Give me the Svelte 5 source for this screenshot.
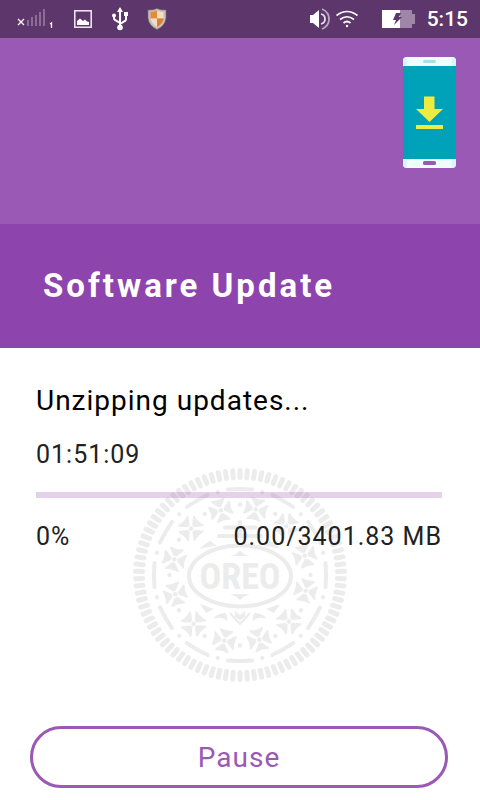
<script lang="ts">
	interface Props {
		status?: string;
		elapsed?: string;
		downloaded?: number;
		total?: number;
	}

	let {
		status = 'Unzipping updates...',
		elapsed = '01:51:09',
		downloaded = 0,
		total = 3401.83
	}: Props = $props();

	let paused = $state(false);
	let percent = $derived(Math.round((downloaded / total) * 100));

	// angles of the repeated cookie decorations
	const ridges = Array.from({ length: 90 }, (_, i) => i * 4);
	const twelfths = Array.from({ length: 12 }, (_, i) => i * 30);
	const petals = [0, 90, 180, 270];
</script>

<div class="screen">
	<div class="status-bar">
		<div class="status-left">
			<svg width="38" height="20" viewBox="0 0 38 20" role="img" aria-label="No signal">
				<path d="M1 10l6 6M7 10l-6 6" stroke="#fff" stroke-width="1.3" />
				<path d="M11 17v-6M15 17v-9M19 17V6M23 17V3M27 17V0" stroke="#8c6d98" stroke-width="2" />
				<path d="M33 15l1.5-1v5" fill="none" stroke="#fff" stroke-width="1.3" />
			</svg>
			<svg width="20" height="20" viewBox="0 0 20 20" role="img" aria-label="Screenshot saved">
				<rect x="1.8" y="1.8" width="16.4" height="16.4" fill="none" stroke="#f3edf5" stroke-width="1.5" />
				<path d="M4 16v-4l3-2.500 3 2.500 2-1.500 2 2 2 .5v3z" fill="#fff" />
			</svg>
			<svg width="18" height="24" viewBox="0 0 18 24" role="img" aria-label="USB connected">
				<path d="M9 4v17M9 16l-5-3q-1-.5-1-2V8M9 17l5-3q1-.5 1-2V8" fill="none" stroke="#fff" stroke-width="2" />
				<path d="M9 0l3 5H6z" fill="#fff" />
				<circle cx="3" cy="8.500" r="2" fill="#fff" />
				<rect x="13" y="5" width="4" height="4" fill="#fff" />
				<circle cx="9" cy="20.500" r="2.800" fill="#fff" />
			</svg>
			<svg width="20" height="22" viewBox="0 0 20 22" role="img" aria-label="Protection on">
				<path d="M1 2Q6 2.500 10 .5 14 2.500 19 2V10Q18 18 10 21.500 2 18 1 10z" fill="#c6bfb7" stroke="#776c6c" stroke-width=".6" />
				<path d="M3.500 4Q7 4 10 2.500V10.500H3.500z" fill="#e58a39" />
				<path d="M16.500 4Q13 4 10 2.500V10.500H16.500z" fill="#f1dec5" />
				<path d="M3.500 10.500H10V19Q4.500 16 3.500 10.500z" fill="#f1dec5" />
				<path d="M16.500 10.500H10V19Q15.500 16 16.500 10.500z" fill="#de7d2a" />
			</svg>
		</div>
		<div class="status-right">
			<svg width="22" height="24" viewBox="0 0 22 24" role="img" aria-label="Sound">
				<path d="M2 8h3l6-5v18l-6-5H2z" fill="#fff" />
				<path d="M13 7q4 1 4 5t-4 5" fill="none" stroke="#e7dfea" stroke-width="1.800" />
				<path d="M14 2q7 3 7 10t-7 10" fill="none" stroke="#b9a5c1" stroke-width="1.800" />
			</svg>
			<svg width="24" height="18" viewBox="0 0 24 18" role="img" aria-label="Wi-Fi">
				<path d="M1.500 5.500q10.500-8 21 0M5 9.500q7-5.500 14 0M8.500 13q3.500-3 7 0" fill="none" stroke="#fff" stroke-width="1.700" />
				<circle cx="12" cy="16" r="1.200" fill="#fff" />
			</svg>
			<svg class="battery" width="34" height="18" viewBox="0 0 34 18" role="img" aria-label="Battery charging">
				<path d="M0 0h18v18H0z" fill="#fff" />
				<path d="M18 0h12v4h3v10h-3v4H18z" fill="#9f86a9" />
				<path d="M14 3h5l-2 4h3l-8 8 2-5h-3z" fill="#5d366b" />
			</svg>
			<span class="clock">5:15</span>
		</div>
	</div>

	<div class="banner">
		<svg width="53" height="111" viewBox="0 0 53 111" aria-hidden="true">
			<rect width="53" height="111" rx="4" fill="#effdfe" />
			<path d="M0 4Q0 0 4 0V9H0zM53 4Q53 0 49 0V9H53zM0 107Q0 111 4 111V102H0zM53 107Q53 111 49 111V102H53z" fill="#d9f7fa" />
			<rect y="9" width="53" height="93" fill="#00a2b9" />
			<rect x="20" y="3" width="13" height="3" rx="1.500" fill="#a9e0e3" />
			<rect x="20" y="104" width="13" height="4" rx="1.500" fill="#9b59b6" />
			<path d="M21 39.500h10.500V52H40L26.500 65 13 52h8z" fill="#eeec42" />
			<rect x="13" y="68" width="27" height="4" fill="#eeec42" />
		</svg>
	</div>

	<header>
		<h1>Software Update</h1>
	</header>

	<main>
		<svg class="cookie" width="216" height="216" viewBox="-108 -108 216 216" aria-hidden="true">
			<defs>
				<path id="petal" d="M0-3.200L6-10.500Q0-8.500-6-10.500z" />
			</defs>
			{#each ridges as angle}
				<path class="line ridge" d="M0-97.500V-104.500" transform="rotate({angle})" />
			{/each}
			{#each twelfths as angle}
				<g transform="rotate({angle})">
					<path class="line" d="M-12-85.500Q0-86.500 12-85.500" />
					<circle cy="-70.500" r="2.200" />
					<circle cy="-86" r="2.100" transform="rotate(15)" />
					<g transform="rotate(13.500) translate(0 -67.500)">
						{#each petals as turn}
							<use class="petal" href="#petal" transform="rotate({turn})" />
						{/each}
						<circle class="seed" r="2.800" />
					</g>
				</g>
			{/each}
			<ellipse class="oval" cy="1" rx="51" ry="30.500" />
			<path class="line" d="M0-53V-40M-15-47.500H15M-21-39H21" />
			<path d="M-10-19Q-4-20 0-24.500 4-20 10-19zM-10 19H10Q4 21 0 25-4 21-10 19z" />
			<path d="M-41-26l11-8.500 7 5.500-9 1zM41-26l-11-8.500-7 5.500 9 1zM-40 29l14 5-8 4zM40 29l-14 5 8 4z" />
			<path d="M-27 43q6-5 13-5l2 8-6-3zM27 43q-6-5-13-5l-2 8 6-3z" />
			<path class="crown" d="M-10 38L0 49 10 38M-4 38v3L0 44l4-3v-3L0 42z" />
			<text x="0" y="14" text-anchor="middle">OREO</text>
		</svg>

		<p class="status">{status}</p>
		<p class="elapsed">{elapsed}</p>
		<div class="track" role="progressbar" aria-label="Update progress" aria-valuemin="0" aria-valuemax="100" aria-valuenow={percent}>
			<div class="fill" style="width: {percent}%"></div>
		</div>
		<div class="amounts">
			<span>{percent}%</span>
			<span>{downloaded.toFixed(2)}/{total.toFixed(2)} MB</span>
		</div>
	</main>

	<footer>
		<button type="button" onclick={() => (paused = !paused)}>{paused ? 'Resume' : 'Pause'}</button>
	</footer>
</div>

<style>
	:global(body) {
		margin: 0;
		background: #fff;
	}

	.screen {
		display: flex;
		flex-direction: column;
		min-height: 100vh;
		font-family: Roboto, 'Liberation Sans', sans-serif;
		color: #212121;
	}

	.status-bar {
		display: flex;
		align-items: center;
		justify-content: space-between;
		height: 38px;
		padding: 0 12px 0 17px;
		background: #5d366b;
	}

	.status-left,
	.status-right {
		display: flex;
		align-items: center;
		gap: 18px;
	}

	.status-right {
		gap: 5px;
	}

	.battery {
		margin: 0 6px 0 18px;
	}

	.clock {
		font-size: 21px;
		font-weight: 500;
		color: #fff;
	}

	.banner {
		display: flex;
		justify-content: flex-end;
		box-sizing: border-box;
		height: 186px;
		padding: 19px 24px;
		background: #9b59b6;
	}

	header {
		padding: 42px 43px;
		background: #8e44ad;
	}

	h1 {
		margin: 0;
		font-size: 33px;
		line-height: 40px;
		font-weight: 700;
		letter-spacing: 3px;
		color: #fff;
	}

	main {
		position: relative;
		padding: 37px 38px 0 36px;
	}

	/* watermark behind the progress details */
	.cookie {
		position: absolute;
		top: 119px;
		left: 50%;
		margin-left: -108px;
		fill: #ececec;
	}

	.line {
		fill: none;
		stroke: #ececec;
		stroke-width: 4;
		stroke-linecap: round;
	}

	.ridge {
		stroke-width: 5;
	}

	.petal {
		stroke: #ececec;
		stroke-width: 2;
		stroke-linejoin: round;
	}

	.seed {
		stroke: #fff;
		stroke-width: 1;
	}

	.oval {
		fill: none;
		stroke: #ececec;
		stroke-width: 4;
	}

	.crown {
		fill: none;
		stroke: #ececec;
		stroke-width: 2;
	}

	.cookie text {
		font-family: 'Roboto Condensed', 'Liberation Sans Narrow', Roboto, sans-serif;
		font-size: 36px;
		font-weight: 700;
	}

	p {
		position: relative;
		margin: 0;
	}

	.status {
		font-size: 28px;
		line-height: 32px;
		letter-spacing: 1px;
		color: #000;
	}

	.elapsed {
		margin-top: 24px;
		font-size: 25px;
		line-height: 28px;
		letter-spacing: 1px;
	}

	.track {
		position: relative;
		height: 6px;
		margin-top: 23px;
		background: rgba(155, 89, 182, 0.27);
	}

	.fill {
		height: 100%;
		background: #9b59b6;
	}

	.amounts {
		position: relative;
		display: flex;
		justify-content: space-between;
		margin-top: 25px;
		font-size: 25px;
		line-height: 28px;
		letter-spacing: 1px;
	}

	footer {
		margin-top: auto;
		padding: 40px 32px 12px 30px;
	}

	button {
		width: 100%;
		height: 62px;
		border: 3px solid #9b59b6;
		border-radius: 31px;
		background: #fff;
		font-family: inherit;
		font-size: 28px;
		letter-spacing: 1px;
		color: #9b59b6;
		cursor: pointer;
	}
</style>
